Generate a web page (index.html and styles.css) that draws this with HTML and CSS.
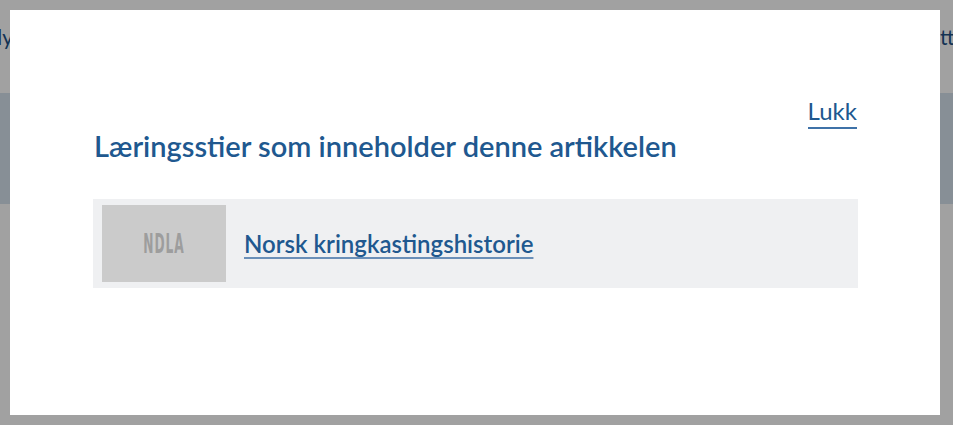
FILE: index.html
```html
<!DOCTYPE html>
<html lang="nb">

<head>
<meta charset="utf-8">
<link rel="stylesheet" href="styles.css">
</head>

<body>
    <div class="page">
        <div class="topbar">
            <div class="topbar-start">
                <span class="topbar-link">Medieproduksjon og medieanalyse</span>
            </div>
            <div class="topbar-end">
                <span class="topbar-link">etter fag</span>
            </div>
        </div>
        <div class="hero"></div>
    </div>

    <div class="backdrop"></div>

    <div class="modal" role="dialog">
        <div class="modal-head">
            <a class="close-link" href="#">Lukk</a>
        </div>
        <h1 class="modal-title">Læringsstier som inneholder denne artikkelen</h1>
        <ul class="path-list">
            <li class="path-item">
                <div class="path-thumb"><span>NDLA</span></div>
                <a class="path-link" href="#">Norsk kringkastingshistorie</a>
            </li>
        </ul>
    </div>
</body>

</html>
```

FILE: styles.css
```css
body {
    margin: 0;
    background-color: #fff;
    font-family: "Source Sans Pro", Lato, "Noto Sans", sans-serif;
    color: #20588f;
    overflow: hidden;
}

.page {
    width: 953px;
    height: 425px;
    overflow: hidden;
}

.topbar {
    display: flex;
    height: 93px;
    padding-top: 24px;
    box-sizing: border-box;
    font-size: 21px;
    white-space: nowrap;
}

/* the menu texts run on under the dialog, only their ends show */
.topbar-start {
    display: flex;
    justify-content: flex-end;
    width: 33px;
    flex-shrink: 0;
}

.topbar-end {
    margin-left: auto;
    width: 24px;
    flex-shrink: 0;
}

.topbar-link {
    color: #1d5186;
}

.hero {
    height: 111px;
    background-color: #d6e3ee;
}

/* dimmed layer behind the dialog */
.backdrop {
    position: fixed;
    inset: 0;
    background-color: rgba(0, 0, 0, 0.37);
}

.modal {
    position: fixed;
    top: 10px;
    left: 10px;
    width: 930px;
    height: 405px;
    box-sizing: border-box;
    padding: 88px 83px 0 84px;
    background-color: #fff;
}

.modal-head {
    display: flex;
    justify-content: flex-end;
}

.close-link {
    font-size: 24px;
    line-height: 26px;
    color: #20588f;
    text-decoration: none;
    border-bottom: 2px solid #3f72a8;
    padding-bottom: 3px;
}

.modal-title {
    margin: -3px 0 0;
    font-size: 29px;
    line-height: 40px;
    font-weight: 600;
    color: #20588f;
}

.path-list {
    list-style: none;
    margin: 33px -1px 0;
    padding: 0;
}

.path-item {
    display: flex;
    align-items: center;
    gap: 18px;
    padding: 6px 9px;
    background-color: #eff0f2;
}

.path-thumb {
    display: flex;
    align-items: center;
    justify-content: center;
    width: 124px;
    height: 77px;
    background-color: #cbcbcb;
}

.path-thumb span {
    font-family: "DejaVu Sans", sans-serif;
    font-size: 26px;
    font-weight: bold;
    letter-spacing: 2px;
    color: #9d9d9d;
    transform: scaleX(0.47);
}

.path-link {
    font-size: 24px;
    font-weight: 600;
    color: #20588f;
    text-decoration: underline;
    text-decoration-color: #6a8fb8;
    text-decoration-thickness: 2px;
    text-underline-offset: 4px;
}
```
